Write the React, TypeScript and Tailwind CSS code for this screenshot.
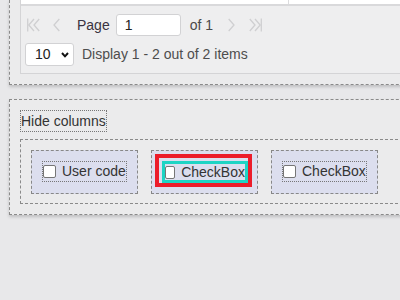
import React from 'react';

const FirstIcon = () => (
  <svg width="13" height="14" viewBox="0 0 13 14" fill="none" stroke="#cfcfd1" strokeWidth="1.3">
    <path d="M0.7 0.5V13.5" />
    <path d="M7 1L1.8 7L7 13" />
    <path d="M12.2 1L7 7L12.2 13" />
  </svg>
);

const LastIcon = () => (
  <svg width="13" height="14" viewBox="0 0 13 14" fill="none" stroke="#cfcfd1" strokeWidth="1.3">
    <path d="M12.3 0.5V13.5" />
    <path d="M6 1L11.2 7L6 13" />
    <path d="M0.8 1L6 7L0.8 13" />
  </svg>
);

const PrevIcon = () => (
  <svg width="7" height="14" viewBox="0 0 7 14" fill="none" stroke="#cfcfd1" strokeWidth="1.3">
    <path d="M6.3 1L1 7L6.3 13" />
  </svg>
);

const NextIcon = () => (
  <svg width="7" height="14" viewBox="0 0 7 14" fill="none" stroke="#cfcfd1" strokeWidth="1.3">
    <path d="M0.7 1L6 7L0.7 13" />
  </svg>
);

const COLUMNS = [
  { id: 'c1', label: 'User code', focused: false },
  { id: 'c2', label: 'CheckBox', focused: true },
  { id: 'c3', label: 'CheckBox', focused: false },
];

export default function App() {
  return (
    <div className="w-[400px] h-[300px] overflow-hidden bg-[#e8e8ea] font-['Liberation_Sans',Arial,sans-serif] text-[14px]">
      {/* Grid panel (top cut off) */}
      <div className="ml-[9px] w-[430px] border-l border-b border-dashed border-[#8a8a8a] bg-[#ebebec] pl-[10px] pb-[10px] shadow-[0_2px_3px_rgba(0,0,0,0.18)]">
        <div className="border-l border-b border-[#d4d4d6] bg-[#eeeeef]">
          {/* last row of the table */}
          <div className="flex h-[6px] bg-white border-b-2 border-[#d9d9db]">
            <div className="w-[268px] border-r border-[#dcdcde]" />
          </div>

          {/* pager */}
          <div className="pt-[8px] pb-[7px] pl-[4px]">
            <div className="flex items-center h-[22px]">
              <span className="ml-[2px] flex"><FirstIcon /></span>
              <span className="ml-[13px] flex"><PrevIcon /></span>
              <span className="ml-[17px] text-[#3a3340]">Page</span>
              <div className="ml-[6px] w-[65px] h-[22px] bg-white border border-[#d2d2d4] rounded-[3px] flex items-center pl-[8px] text-[#222]">1</div>
              <span className="ml-[9px] text-[#4a4a4a]">of 1</span>
              <span className="ml-[15px] flex"><NextIcon /></span>
              <span className="ml-[14px] flex"><LastIcon /></span>
            </div>

            <div className="flex items-center mt-[7px] h-[23px]">
              <div className="w-[49px] h-[23px] bg-white border border-[#d2d2d4] rounded-[3px] flex items-center pl-[9px] text-[#222]">
                <span>10</span>
                <svg className="ml-[10px]" width="8" height="6" viewBox="0 0 8 6" fill="none" stroke="#111" strokeWidth="2">
                  <path d="M1 1L4 4.3L7 1" />
                </svg>
              </div>
              <span className="ml-[8px] text-[#4d4d4d]">Display 1 - 2 out of 2 items</span>
            </div>
          </div>
        </div>
      </div>

      {/* Hide columns panel */}
      <div className="mt-[14px] ml-[9px] w-[430px] border border-dashed border-[#8a8a8a] bg-[#ebebec] pl-[10px] pt-[10px] pb-[10px] shadow-[0_2px_3px_rgba(0,0,0,0.18)]">
        <div className="inline-flex items-center h-[22px] border border-dotted border-[#777] text-[#333]">
          Hide columns
        </div>

        <div className="mt-[7px] border border-dashed border-[#8a8a8a] pl-[10px] pt-[10px] pb-[9px] flex gap-[13px]">
          {COLUMNS.map((col) => (
            <div key={col.id} className="relative w-[107px] h-[44px] border border-dashed border-[#888] bg-[#dcdeee] pl-[10px] pt-[10px]">
              <label
                className={`flex items-center ${col.focused ? 'w-[86px] h-[22px] border-[3px] border-[#1ed4c4]' : 'w-[85px] h-[21px] border border-dotted border-[#777]'} text-[#333] whitespace-nowrap overflow-hidden`}
              >
                <input
                  type="checkbox"
                  className="m-0 w-[13px] h-[13px] min-w-0 shrink appearance-none bg-white border border-[#767676] rounded-[2px]"
                />
                <span className="ml-[6px] shrink-0">{col.label}</span>
              </label>
              {col.focused && (
                <div className="absolute left-[3px] top-[3px] w-[97px] h-[33px] border-4 border-[#ec1c2a] pointer-events-none" />
              )}
            </div>
          ))}
        </div>
      </div>
    </div>
  );
}
